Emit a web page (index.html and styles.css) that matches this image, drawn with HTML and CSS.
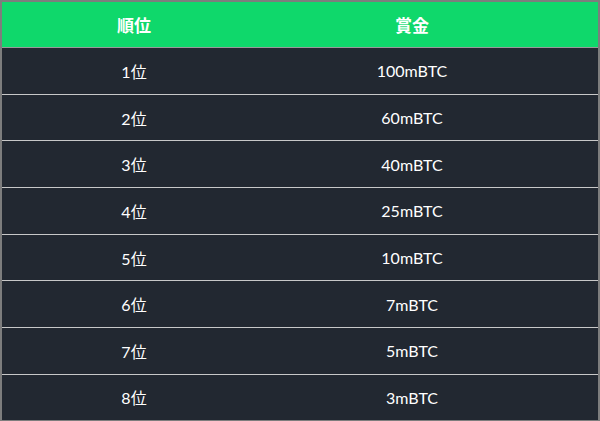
FILE: index.html
```html
<!DOCTYPE html>
<html lang="ja">

<head>
    <meta charset="UTF-8">
    <meta name="viewport" content="width=device-width, initial-scale=1.0">
    <title>賞金</title>
    <link rel="stylesheet" href="styles.css">
</head>

<body>

    <div class="prize">
        <div class="row head">
            <div class="rank">順位</div>
            <div class="money">賞金</div>
        </div>
        <div class="row">
            <div class="rank">1位</div>
            <div class="money">100mBTC</div>
        </div>
        <div class="row">
            <div class="rank">2位</div>
            <div class="money">60mBTC</div>
        </div>
        <div class="row">
            <div class="rank">3位</div>
            <div class="money">40mBTC</div>
        </div>
        <div class="row">
            <div class="rank">4位</div>
            <div class="money">25mBTC</div>
        </div>
        <div class="row">
            <div class="rank">5位</div>
            <div class="money">10mBTC</div>
        </div>
        <div class="row">
            <div class="rank">6位</div>
            <div class="money">7mBTC</div>
        </div>
        <div class="row">
            <div class="rank">7位</div>
            <div class="money">5mBTC</div>
        </div>
        <div class="row last">
            <div class="rank">8位</div>
            <div class="money">3mBTC</div>
        </div>
    </div>

</body>

</html>
```

FILE: styles.css
```css
* {
    box-sizing: border-box;
}

body {
    margin: 0;
    background-color: #ffffff;
    font-family: "Lato", "Noto Sans CJK JP", sans-serif;
}

.prize {
    width: 600px;
    height: 421px;
    border: 2px solid #7d7d7d;
    border-bottom-width: 1px;
    background-color: #222831;
    display: flex;
    flex-flow: column;
}

.row {
    display: grid;
    grid-template-columns: 264px 1fr;
    height: 46.7px;
    border-bottom: 1px solid #c8c8c8;
    color: #ffffff;
    font-size: 16px;
}

.row.last {
    border-bottom: none;
    flex: 1;
}

.row div {
    display: flex;
    align-items: center;
    justify-content: center;
}

.row .money {
    padding-right: 40px;
}

/* 表头 */
.head {
    height: 46px;
    background-color: #0fd86b;
    font-size: 17px;
    font-weight: bold;
    border-bottom: 1px solid #9a9a9a;
}
```
